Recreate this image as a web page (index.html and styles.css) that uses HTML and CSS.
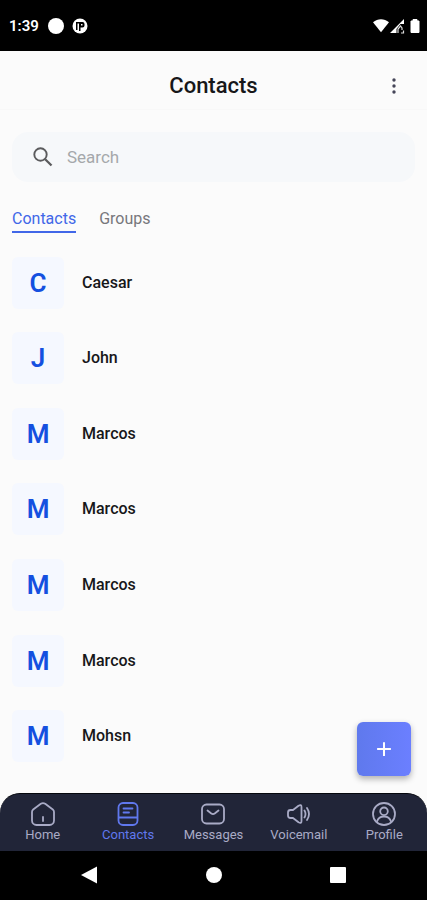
FILE: index.html
```html
<!DOCTYPE html>
<html lang="en">
<head>
<meta charset="utf-8">
<meta name="viewport" content="width=device-width, initial-scale=1">
<title>Contacts</title>
<link rel="stylesheet" href="styles.css">
</head>
<body>
<div class="screen">
  <div class="status">
    <span class="clock">1:39</span>
    <svg class="dot" viewBox="0 0 16 16" aria-hidden="true"><circle cx="8" cy="8" r="8" fill="#fff"/></svg>
    <svg class="dot" viewBox="0 0 16 16" aria-hidden="true"><circle cx="8" cy="8" r="7.500" fill="#fff"/><path d="M4 4h6.500a2 2 0 0 1 2 2v1.500a2 2 0 0 1-2 2H8.500V13H7V5.500H5.500V12H4Z"/><path d="M9 6h1.500v1.500H9Z" fill="#fff"/></svg>
    <svg class="signals" viewBox="0 0 48 16" aria-hidden="true">
      <path d="M0 4.200C4.800.2 11.200.2 16 4.200L8 14.200Z" fill="#fff"/>
      <path d="M17 15 31 1v5h-3.500l-4 5v4Z" fill="#fff"/><path d="M25 15v-4l2.500-3 1.500 2v2M28 15h2.500v-2.500" fill="none" stroke="#ddd" stroke-width="1.200"/>
      <path d="M38 3h2V1.500h4V3h2v11.500h-8Z" fill="#fff" stroke="#fff" stroke-linejoin="round"/>
    </svg>
  </div>
  <header class="header">
    <h1>Contacts</h1>
    <button class="more" aria-label="More options">
      <svg viewBox="0 0 20 20" fill="#454558"><circle cx="10" cy="4" r="1.700"/><circle cx="10" cy="10" r="1.700"/><circle cx="10" cy="16" r="1.700"/></svg>
    </button>
  </header>
  <main class="main">
    <label class="search">
      <svg viewBox="0 0 24 24" fill="none" stroke="#5b5b5d" stroke-width="1.900" aria-hidden="true"><circle cx="9.500" cy="9.500" r="6.200"/><path d="m14.200 14.200 6.300 6.300" stroke-width="2.300"/></svg>
      <input type="search" placeholder="Search" aria-label="Search">
    </label>
    <div class="tabs">
      <button class="tab active">Contacts</button>
      <button class="tab">Groups</button>
    </div>
    <ul class="list">
      <li><span class="avatar">C</span><span class="name">Caesar</span></li>
      <li><span class="avatar">J</span><span class="name">John</span></li>
      <li><span class="avatar">M</span><span class="name">Marcos</span></li>
      <li><span class="avatar">M</span><span class="name">Marcos</span></li>
      <li><span class="avatar">M</span><span class="name">Marcos</span></li>
      <li><span class="avatar">M</span><span class="name">Marcos</span></li>
      <li><span class="avatar">M</span><span class="name">Mohsn</span></li>
    </ul>
    <button class="add" aria-label="Add contact">
      <svg viewBox="0 0 24 24" stroke="#fff" stroke-width="2.200"><path d="M12 4.500v15M4.500 12h15"/></svg>
    </button>
  </main>
  <nav class="nav">
    <a href="#home"><svg viewBox="0 0 24 24"><path d="M1 10Q1 8.500 2.200 7.500L9.800 1.800Q12 .4 14.200 1.800L21.800 7.500Q23 8.500 23 10V18.500a4.500 4.500 0 0 1-4.500 4.500h-13A4.500 4.500 0 0 1 1 18.500ZM12 15v4"/></svg>Home</a>
    <a href="#contacts" class="current"><svg viewBox="0 0 24 24"><rect x="2.500" y="1" width="19" height="22" rx="4.500"/><path d="M3 15.500h18M7.500 6.500h9M7.500 10.500h5.500"/></svg>Contacts</a>
    <a href="#messages"><svg viewBox="0 0 24 24"><rect x="1" y="2.500" width="22" height="19" rx="4.500"/><path d="m6.500 8.500 3.800 3q1.700 1.200 3.400 0l3.800-3"/></svg>Messages</a>
    <a href="#voicemail"><svg viewBox="0 0 24 24"><path d="M3.500 8H6l5.500-4.300Q14.500 2 14.500 5v14q0 3-3 1.300L6 16H3.500Q1 16 1 13.500v-3Q1 8 3.500 8ZM17.500 8.500q2 3.500 0 7M20 6q4 6 0 12"/></svg>Voicemail</a>
    <a href="#profile"><svg viewBox="0 0 24 24"><circle cx="12" cy="12" r="11"/><circle cx="12" cy="9.300" r="3.800"/><path d="M5 19.500q1.500-5 7-5t7 5"/></svg>Profile</a>
  </nav>
  <div class="system">
    <button aria-label="Back"><svg viewBox="0 0 18 18" fill="#fff"><path d="M1 9 17 .5v17Z"/></svg></button>
    <button aria-label="Home screen"><svg viewBox="0 0 18 18" fill="#fff"><circle cx="9" cy="9" r="8"/></svg></button>
    <button aria-label="Recent apps"><svg viewBox="0 0 18 18" fill="#fff"><rect x="1" y="1" width="16" height="16" rx="1"/></svg></button>
  </div>
</div>
</body>
</html>
```
FILE: styles.css
```css
* { box-sizing: border-box; }
body {
  margin: 0;
  background: #fbfbfb;
  color: #171719;
  font-family: Roboto, "Liberation Sans", sans-serif;
}
button {
  padding: 0;
  border: 0;
  background: none;
  font: inherit;
  cursor: pointer;
}
svg { display: block; }
.screen {
  display: flex;
  flex-direction: column;
  min-height: 100vh;
}
.status {
  display: flex;
  align-items: center;
  gap: 8px;
  padding: 16px 6px 15px 9px;
  background: #000;
  color: #fff;
}
.clock {
  margin-right: 1px;
  font-size: 15px;
  font-weight: 600;
  line-height: 20px;
}
.dot { width: 16px; height: 16px; }
.signals { width: 48px; height: 16px; margin-left: auto; }
.header {
  display: grid;
  grid-template-columns: 42px 1fr 42px;
  align-items: center;
  padding: 20px 12px 8px;
  border-bottom: 1px solid #f8f8f8;
}
.header h1 {
  grid-column: 2;
  margin: 0;
  font-size: 22px;
  font-weight: 500;
  line-height: 30px;
  text-align: center;
}
.more { justify-self: end; margin-right: 11px; }
.more svg { width: 20px; height: 20px; }
.main {
  position: relative;
  flex: 1;
  display: flex;
  flex-direction: column;
  padding: 22px 12px 19px;
}
.search {
  display: flex;
  align-items: center;
  gap: 12px;
  height: 50px;
  padding: 0 19px;
  border-radius: 16px;
  background: #f6f8fa;
}
.search svg { width: 24px; height: 24px; }
.search input {
  flex: 1;
  min-width: 0;
  padding: 0;
  border: 0;
  outline: 0;
  background: none;
  color: #171719;
  font: 400 17px/24px Roboto, "Liberation Sans", sans-serif;
}
.search input::placeholder { color: #a5a8ab; opacity: 1; }
.tabs {
  display: flex;
  gap: 23px;
  padding-top: 26px;
}
.tab {
  padding-bottom: 1px;
  border-bottom: 2px solid transparent;
  color: #77777b;
  font-size: 16px;
  line-height: 22px;
}
.tab.active {
  border-color: #4167e8;
  color: #4167e8;
}
.list {
  flex: 1;
  display: grid;
  grid-auto-rows: 1fr;
  margin: 0;
  padding: 12px 0 0;
  list-style: none;
}
.list li {
  display: flex;
  align-items: center;
  gap: 18px;
}
.avatar {
  width: 52px;
  border-radius: 6px;
  background: #f5f8ff;
  color: #1450e0;
  font-size: 26px;
  font-weight: 600;
  line-height: 52px;
  text-align: center;
}
.name {
  font-size: 16px;
  font-weight: 500;
  line-height: 24px;
}
.add {
  position: absolute;
  right: 16px;
  bottom: 17px;
  display: grid;
  place-items: center;
  width: 54px;
  height: 54px;
  border-radius: 6px;
  background: linear-gradient(90deg, #5f79ed, #6b7fff);
  box-shadow: 0 3px 6px rgba(0, 0, 0, .3);
}
.add svg { width: 22px; height: 22px; }
.nav {
  display: grid;
  grid-template-columns: repeat(5, 1fr);
  padding: 8px 0;
  border-top: 1px solid #05070d;
  border-radius: 20px 20px 0 0;
  background: #212538;
}
.nav a {
  display: flex;
  flex-direction: column;
  align-items: center;
  gap: 1px;
  color: #a9abc6;
  font-size: 13px;
  line-height: 16px;
  text-decoration: none;
}
.nav svg {
  width: 24px;
  height: 24px;
  fill: none;
  stroke: currentColor;
  stroke-width: 1.8;
  stroke-linecap: round;
  stroke-linejoin: round;
}
.nav .current { color: #6078ee; }
.system {
  display: flex;
  justify-content: space-between;
  padding: 15px 80px 16px;
  background: #000;
}
.system svg { width: 18px; height: 18px; }
```
